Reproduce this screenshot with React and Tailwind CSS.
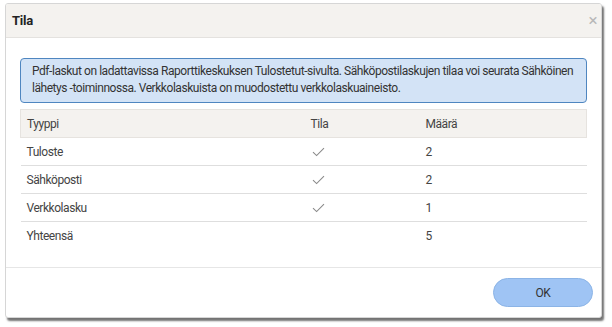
const rows = [
  { type: "Tuloste", ok: true, count: 2 },
  { type: "Sähköposti", ok: true, count: 2 },
  { type: "Verkkolasku", ok: true, count: 1 },
  { type: "Yhteensä", ok: false, count: 5 },
];

function Check() {
  return (
    <svg width="13" height="10" viewBox="0 0 13 10" fill="none">
      <path d="M1 5.2 L4.6 8.6 L12 1.2" stroke="#8a8a8a" strokeWidth="1.1" />
    </svg>
  );
}

export default function App() {
  return (
    <div
      className="w-[612px] h-[327px] bg-white pt-[3px] pl-[5px] tracking-[-0.45px]"
      style={{ fontFamily: "Roboto,'Liberation Sans',sans-serif" }}
    >
      <div className="w-[597px] h-[315px] bg-white border border-[#d6d6d6] rounded-[3px] shadow-[2px_3px_2px_rgba(0,0,0,0.55)] flex flex-col overflow-hidden">
        <div className="h-[34px] bg-[#f4f2ef] border-b border-[#e4e2df] flex items-center justify-between pl-[6px] pr-[4px] shrink-0">
          <span className="text-[13px] font-bold text-[#222] tracking-[-0.2px]">Tila</span>
          <span className="text-[#b8b8b8] text-[17px] leading-none">×</span>
        </div>

        <div className="flex-1 px-[14px] pt-[20px]">
          <div className="bg-[#d3e3f6] border border-[#4f86c0] rounded-[4px] px-[11px] pt-[4px] pb-[5px] text-[12px] leading-[17px] text-[#333]">
            Pdf-laskut on ladattavissa Raporttikeskuksen Tulostetut-sivulta. Sähköpostilaskujen tilaa voi seurata Sähköinen lähetys -toiminnossa. Verkkolaskuista on muodostettu verkkolaskuaineisto.
          </div>

          <table className="w-full mt-[6px] text-[12px] text-[#444] border-collapse">
            <thead>
              <tr className="bg-[#f4f2ef] h-[28px] border border-[#e6e3df]">
                <th className="text-left font-normal pl-[6px] w-[290px]">Tyyppi</th>
                <th className="text-left font-normal w-[115px]">Tila</th>
                <th className="text-left font-normal">Määrä</th>
              </tr>
            </thead>
            <tbody>
              {rows.map((r, i) => (
                <tr key={r.type} className={`h-[28px] ${i < rows.length - 1 ? "border-b border-[#dedede]" : ""}`}>
                  <td className="pl-[6px]">{r.type}</td>
                  <td className="pl-[1px]">{r.ok && <Check />}</td>
                  <td>{r.count}</td>
                </tr>
              ))}
            </tbody>
          </table>
        </div>

        <div className="h-[50px] border-t border-[#e6e6e6] flex items-center justify-end pr-[8px] shrink-0">
          <button className="w-[100px] h-[29px] rounded-full bg-[#9fc4f4] border border-[#8cb4e6] text-[12px] text-[#333]">
            OK
          </button>
        </div>
      </div>
    </div>
  );
}
